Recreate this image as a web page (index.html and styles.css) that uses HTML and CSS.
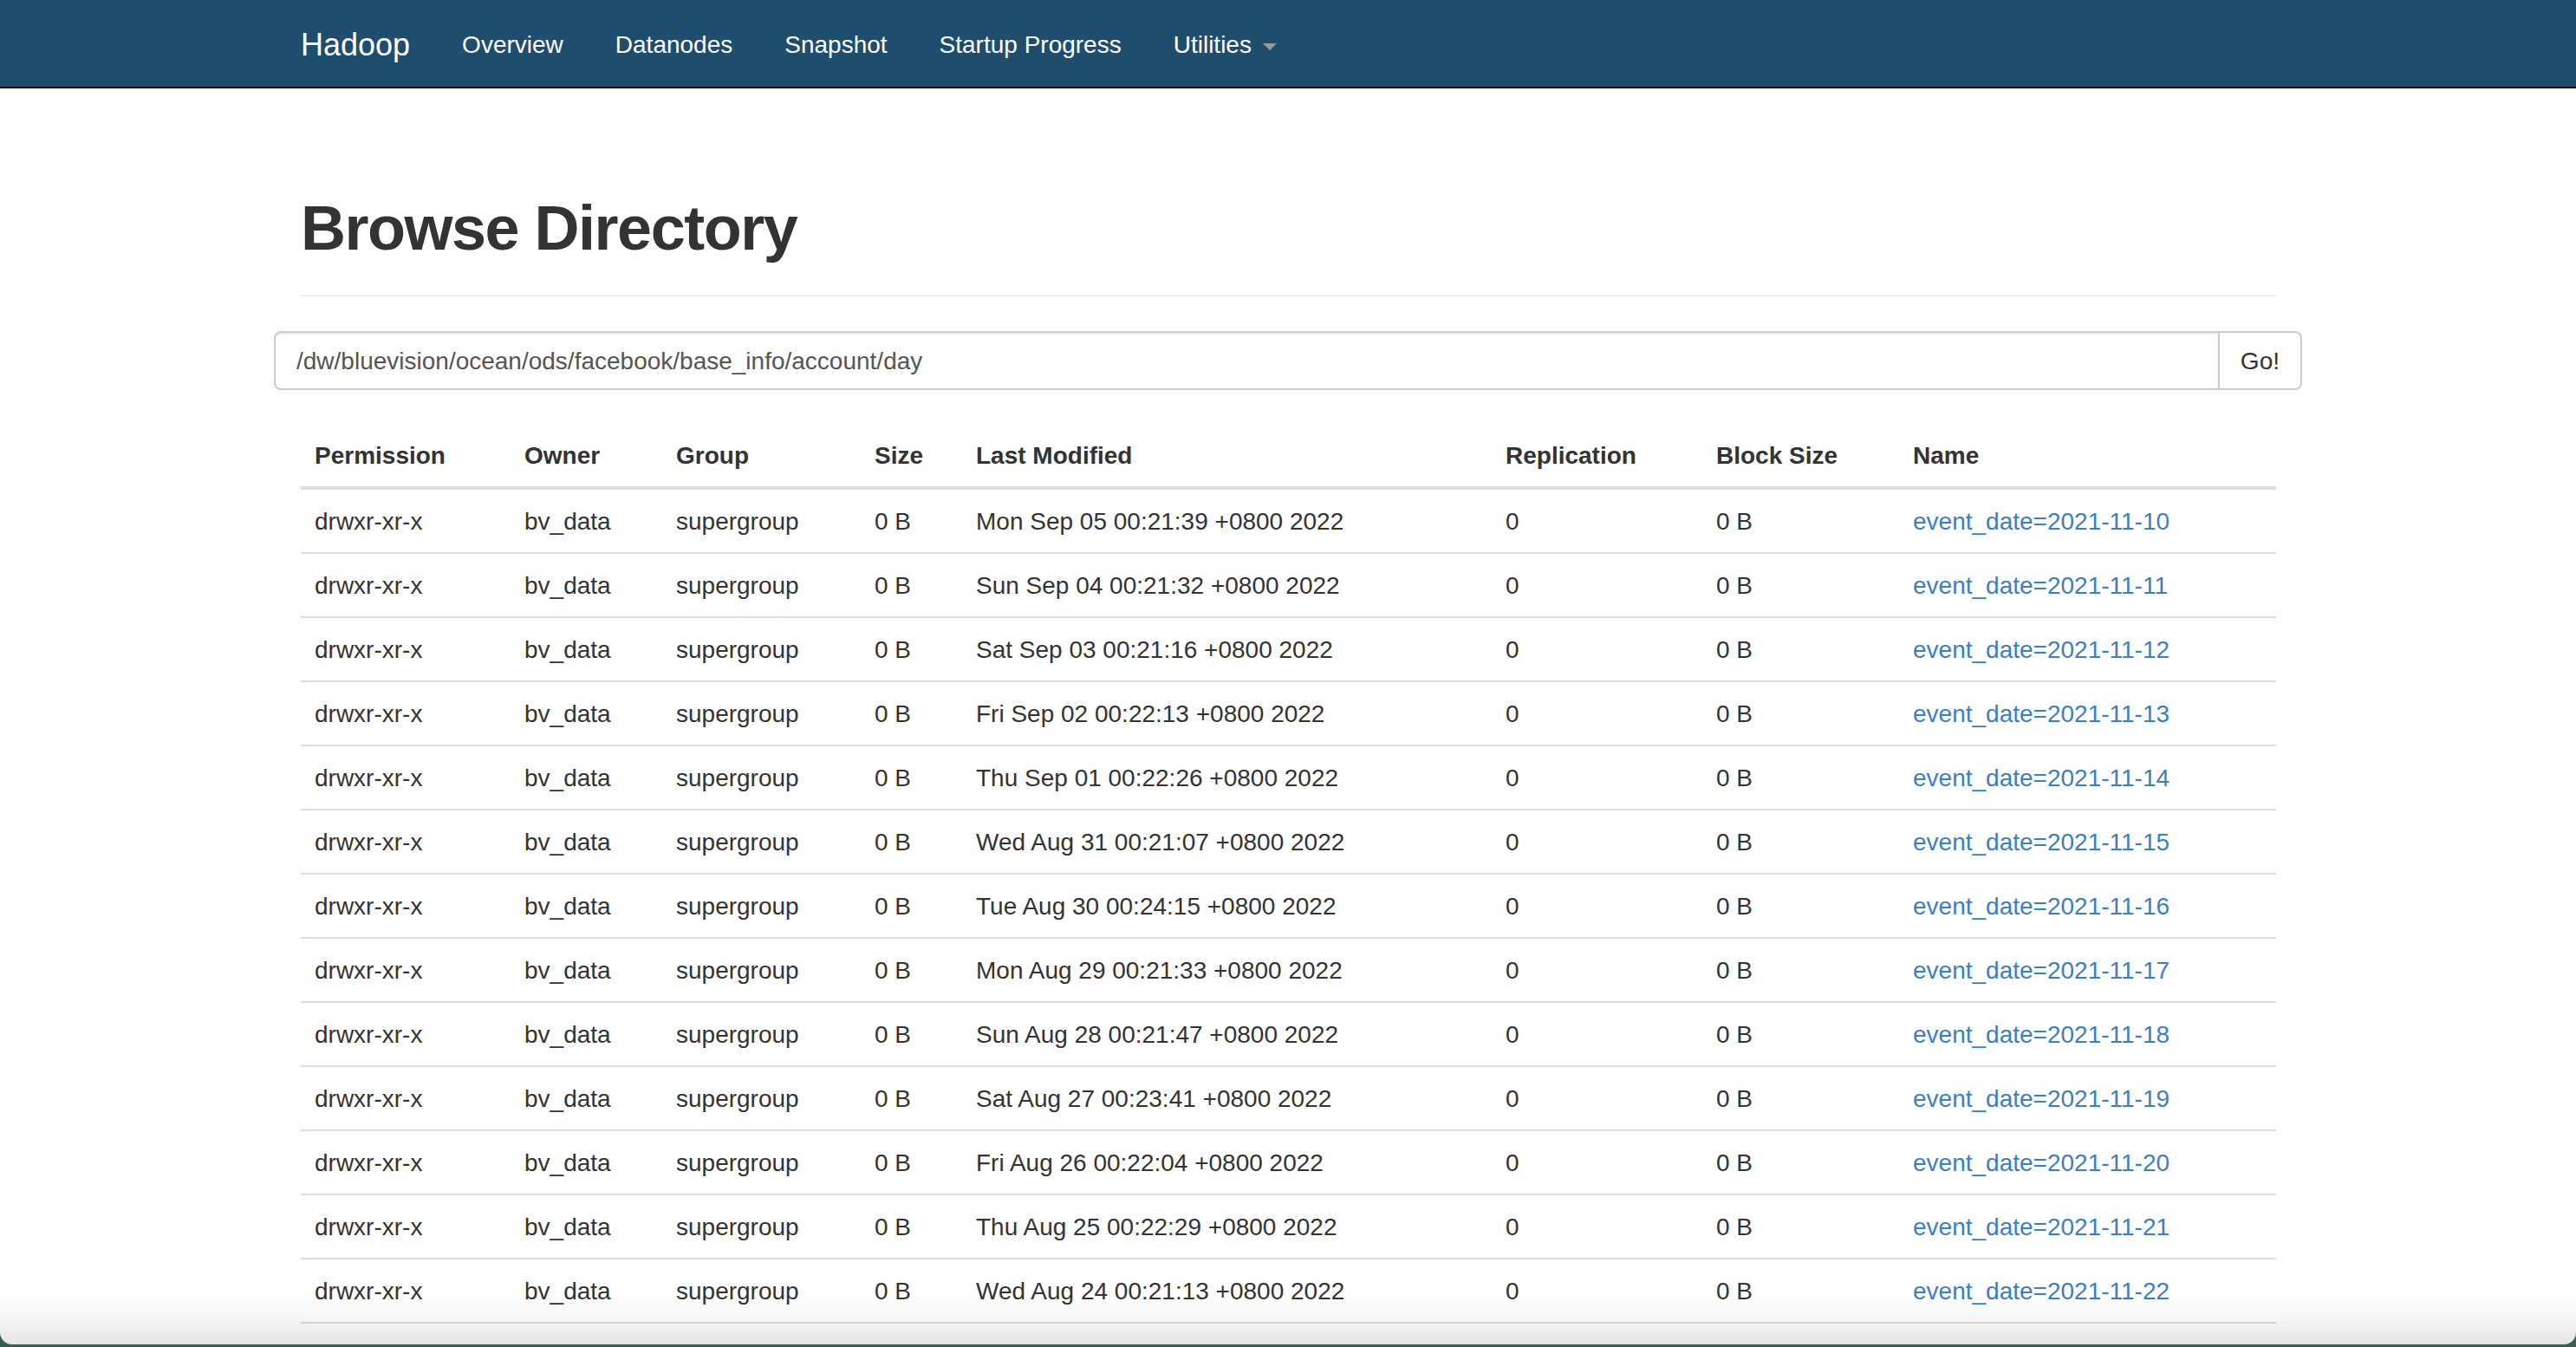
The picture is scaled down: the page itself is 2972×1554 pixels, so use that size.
FILE: index.html
```html
<!DOCTYPE html>
<html lang="en">
<head>
<meta charset="utf-8">
<title>Browsing HDFS</title>
<link rel="stylesheet" href="styles.css">
</head>
<body>
<nav class="navbar">
  <div class="container nav-inner">
    <a class="brand" href="#">Hadoop</a>
    <ul class="nav">
      <li><a href="#">Overview</a></li>
      <li><a href="#">Datanodes</a></li>
      <li><a href="#">Snapshot</a></li>
      <li><a href="#">Startup Progress</a></li>
      <li><a href="#">Utilities <b class="caret"></b></a></li>
    </ul>
  </div>
</nav>

<div class="container">
  <div class="page-header">
    <h1>Browse Directory</h1>
  </div>

  <form class="path-form" onsubmit="return false;">
    <div class="input-group">
      <input class="path-input" type="text" value="/dw/bluevision/ocean/ods/facebook/base_info/account/day">
      <button class="btn" type="button">Go!</button>
    </div>
  </form>

  <table class="listing">
    <colgroup>
      <col class="c-perm"><col class="c-owner"><col class="c-group"><col class="c-size">
      <col class="c-mod"><col class="c-rep"><col class="c-block"><col class="c-name">
    </colgroup>
    <thead>
      <tr>
        <th>Permission</th><th>Owner</th><th>Group</th><th>Size</th>
        <th>Last Modified</th><th>Replication</th><th>Block Size</th><th>Name</th>
      </tr>
    </thead>
    <tbody>
      <tr><td>drwxr-xr-x</td><td>bv_data</td><td>supergroup</td><td>0 B</td><td>Mon Sep 05 00:21:39 +0800 2022</td><td>0</td><td>0 B</td><td><a href="#">event_date=2021-11-10</a></td></tr>
      <tr><td>drwxr-xr-x</td><td>bv_data</td><td>supergroup</td><td>0 B</td><td>Sun Sep 04 00:21:32 +0800 2022</td><td>0</td><td>0 B</td><td><a href="#">event_date=2021-11-11</a></td></tr>
      <tr><td>drwxr-xr-x</td><td>bv_data</td><td>supergroup</td><td>0 B</td><td>Sat Sep 03 00:21:16 +0800 2022</td><td>0</td><td>0 B</td><td><a href="#">event_date=2021-11-12</a></td></tr>
      <tr><td>drwxr-xr-x</td><td>bv_data</td><td>supergroup</td><td>0 B</td><td>Fri Sep 02 00:22:13 +0800 2022</td><td>0</td><td>0 B</td><td><a href="#">event_date=2021-11-13</a></td></tr>
      <tr><td>drwxr-xr-x</td><td>bv_data</td><td>supergroup</td><td>0 B</td><td>Thu Sep 01 00:22:26 +0800 2022</td><td>0</td><td>0 B</td><td><a href="#">event_date=2021-11-14</a></td></tr>
      <tr><td>drwxr-xr-x</td><td>bv_data</td><td>supergroup</td><td>0 B</td><td>Wed Aug 31 00:21:07 +0800 2022</td><td>0</td><td>0 B</td><td><a href="#">event_date=2021-11-15</a></td></tr>
      <tr><td>drwxr-xr-x</td><td>bv_data</td><td>supergroup</td><td>0 B</td><td>Tue Aug 30 00:24:15 +0800 2022</td><td>0</td><td>0 B</td><td><a href="#">event_date=2021-11-16</a></td></tr>
      <tr><td>drwxr-xr-x</td><td>bv_data</td><td>supergroup</td><td>0 B</td><td>Mon Aug 29 00:21:33 +0800 2022</td><td>0</td><td>0 B</td><td><a href="#">event_date=2021-11-17</a></td></tr>
      <tr><td>drwxr-xr-x</td><td>bv_data</td><td>supergroup</td><td>0 B</td><td>Sun Aug 28 00:21:47 +0800 2022</td><td>0</td><td>0 B</td><td><a href="#">event_date=2021-11-18</a></td></tr>
      <tr><td>drwxr-xr-x</td><td>bv_data</td><td>supergroup</td><td>0 B</td><td>Sat Aug 27 00:23:41 +0800 2022</td><td>0</td><td>0 B</td><td><a href="#">event_date=2021-11-19</a></td></tr>
      <tr><td>drwxr-xr-x</td><td>bv_data</td><td>supergroup</td><td>0 B</td><td>Fri Aug 26 00:22:04 +0800 2022</td><td>0</td><td>0 B</td><td><a href="#">event_date=2021-11-20</a></td></tr>
      <tr><td>drwxr-xr-x</td><td>bv_data</td><td>supergroup</td><td>0 B</td><td>Thu Aug 25 00:22:29 +0800 2022</td><td>0</td><td>0 B</td><td><a href="#">event_date=2021-11-21</a></td></tr>
      <tr><td>drwxr-xr-x</td><td>bv_data</td><td>supergroup</td><td>0 B</td><td>Wed Aug 24 00:21:13 +0800 2022</td><td>0</td><td>0 B</td><td><a href="#">event_date=2021-11-22</a></td></tr>
    </tbody>
  </table>
</div>

<div class="desktop-edge"></div>
<div class="window-bottom"></div>
</body>
</html>
```

FILE: styles.css
```css
* {
  box-sizing: border-box;
}

html, body {
  margin: 0;
  padding: 0;
  background: #fff;
}

body {
  font-family: "Liberation Sans", Arial, Helvetica, sans-serif;
  font-size: 28px;
  line-height: 40px;
  color: #333;
}

a {
  color: #3a7fc4;
  text-decoration: none;
}

.container {
  width: 2340px;
  margin: 0 auto;
  padding: 0 30px 0 31px;
}

/* ---------- navbar ---------- */
.navbar {
  background: #1f4d6d;
  border-bottom: 2px solid #080808;
  min-height: 102px;
}

.nav-inner {
  display: flex;
  align-items: stretch;
}

.brand {
  display: block;
  height: 100px;
  padding: 32px 30px 28px;
  margin-left: -30px;
  font-size: 36px;
  line-height: 40px;
  color: #fff;
}

.nav {
  display: flex;
  list-style: none;
  margin: 0;
  padding: 0;
}

.nav a {
  display: block;
  padding: 32px 30px 28px;
  line-height: 40px;
  color: #fff;
}

.caret {
  display: inline-block;
  width: 0;
  height: 0;
  margin-left: 5px;
  vertical-align: middle;
  border-top: 8px solid #999;
  border-left: 8px solid transparent;
  border-right: 8px solid transparent;
}

/* ---------- header ---------- */
.page-header {
  margin: 122px 0 40px;
  padding-bottom: 18px;
  border-bottom: 2px solid #eee;
}

.page-header h1 {
  margin: 0 0 19px;
  font-size: 72px;
  line-height: 79px;
  font-weight: bold;
  letter-spacing: -1.5px;
  color: #333;
}

/* ---------- path form ---------- */
.path-form {
  margin: 0 -30px 0 -31px;
}

.input-group {
  display: flex;
}

.path-input {
  flex: 1;
  height: 68px;
  padding: 13px 24px 11px;
  font-family: inherit;
  font-size: 28px;
  line-height: 40px;
  color: #555;
  background: #fff;
  border: 2px solid #ccc;
  border-radius: 8px 0 0 8px;
  box-shadow: inset 0 2px 2px rgba(0, 0, 0, 0.075);
  outline: none;
}

.btn {
  height: 68px;
  margin-left: -2px;
  padding: 13px 24px 11px;
  font-family: inherit;
  font-size: 28px;
  line-height: 40px;
  color: #333;
  background: #fff;
  border: 2px solid #ccc;
  border-radius: 0 8px 8px 0;
}

/* ---------- listing table ---------- */
.listing {
  width: 100%;
  margin-top: 39px;
  border-collapse: collapse;
  border-spacing: 0;
  table-layout: fixed;
}

.c-perm  { width: 242px; }
.c-owner { width: 175px; }
.c-group { width: 229px; }
.c-size  { width: 117px; }
.c-mod   { width: 611px; }
.c-rep   { width: 243px; }
.c-block { width: 227px; }
.c-name  { width: 435px; }

.listing th {
  text-align: left;
  font-weight: bold;
  padding: 17px 16px 15px;
  line-height: 40px;
  border-bottom: 4px solid #ddd;
  white-space: nowrap;
}

.listing td {
  padding: 17px 16px 15px;
  line-height: 40px;
  border-top: 2px solid #ddd;
  white-space: nowrap;
}

.listing tbody tr:last-child td {
  border-bottom: 2px solid #ddd;
}

/* ---------- window edge of the screenshot ---------- */
.desktop-edge {
  position: fixed;
  left: 0;
  right: 0;
  bottom: 0;
  height: 18px;
  background: #35604f;
  pointer-events: none;
}

.window-bottom {
  position: fixed;
  left: 0;
  right: 0;
  bottom: 3px;
  height: 64px;
  border-radius: 0 0 14px 14px;
  background:
    linear-gradient(to bottom, rgba(0, 0, 0, 0) 0%, rgba(0, 0, 0, 0.025) 45%, rgba(0, 0, 0, 0.1) 100%),
    linear-gradient(to bottom, rgba(255, 255, 255, 0) 49px, #fff 49px);
  pointer-events: none;
}
```
